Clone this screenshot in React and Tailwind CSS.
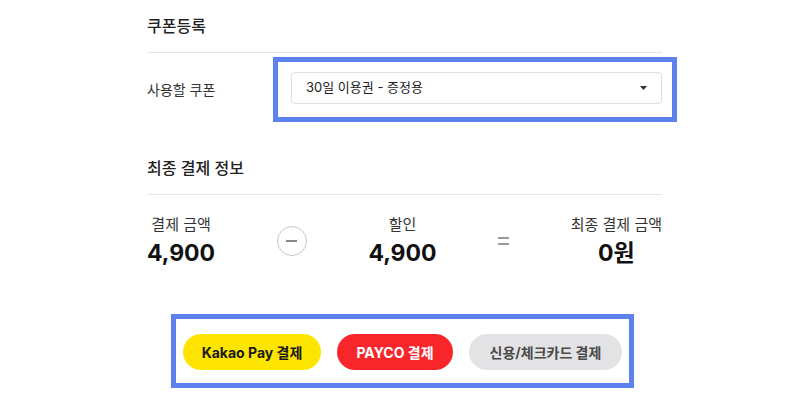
import React from 'react'

const PAY_BUTTONS = [
  { label: 'Kakao Pay 결제', cls: 'w-[138px] bg-[#fee500] text-[#1a1a1a]' },
  { label: 'PAYCO 결제', cls: 'w-[116px] bg-[#f8262b] text-white' },
  { label: '신용/체크카드 결제', cls: 'w-[153px] bg-[#e3e3e5] text-[#4a4a4a]' }
]

function SectionTitle({ children, className = '' }) {
  return (
    <div className={`pb-[14px] border-b border-[#e6e6e6] ${className}`}>
      <h2 className="text-[16px] leading-6 font-medium text-[#222]">{children}</h2>
    </div>
  )
}

function Amount({ label, value }) {
  return (
    <div className="flex flex-col items-center">
      <div className="text-[15px] leading-[22px] text-[#333]">{label}</div>
      <div className="mt-[2px] text-[23px] leading-[30px] font-bold text-[#111]">{value}</div>
    </div>
  )
}

export default function App() {
  return (
    <div className="w-[800px] h-[400px] bg-white font-[Inter,'Noto_Sans_CJK_KR',sans-serif] overflow-hidden">
      <div className="ml-[147px] w-[515px]">
        <SectionTitle className="pt-[14px]">쿠폰등록</SectionTitle>

        <div className="mt-[4px] flex items-center">
          <div className="w-[126px] shrink-0 text-[14px] text-[#333]">사용할 쿠폰</div>
          <div className="w-[404px] shrink-0 border-[5px] border-[#5d82f0] pt-[10px] pb-[13px] pl-[13px] pr-[10px]">
            <div className="h-[32px] rounded-[4px] border border-[#dedede] flex items-center justify-between pl-[14px] pr-[14px]">
              <span className="text-[13px] text-[#222]">30일 이용권 - 증정용</span>
              <svg width="7" height="4" viewBox="0 0 7 4">
                <path d="M0 0h7L3.5 4z" fill="#333" />
              </svg>
            </div>
          </div>
        </div>

        <SectionTitle className="pt-[34px]">최종 결제 정보</SectionTitle>

        <div className="mt-[19px] flex items-center justify-between">
          <Amount label="결제 금액" value="4,900" />
          <div className="w-[30px] h-[30px] rounded-full border border-[#c8c8c8] flex items-center justify-center">
            <div className="w-[11px] h-[2px] bg-[#888]" />
          </div>
          <Amount label="할인" value="4,900" />
          <div className="w-[11px] flex flex-col gap-[4px]">
            <div className="h-[2px] bg-[#999]" />
            <div className="h-[2px] bg-[#999]" />
          </div>
          <Amount label="최종 결제 금액" value="0원" />
        </div>

        <div className="mt-[46px] ml-[24px] w-[463px] border-[5px] border-[#5d82f0] pt-[15px] pb-[13px] px-[7px] flex justify-between">
          {PAY_BUTTONS.map(b => (
            <button key={b.label} className={`h-[36px] rounded-full text-[14px] font-bold ${b.cls}`}>
              {b.label}
            </button>
          ))}
        </div>
      </div>
    </div>
  )
}
